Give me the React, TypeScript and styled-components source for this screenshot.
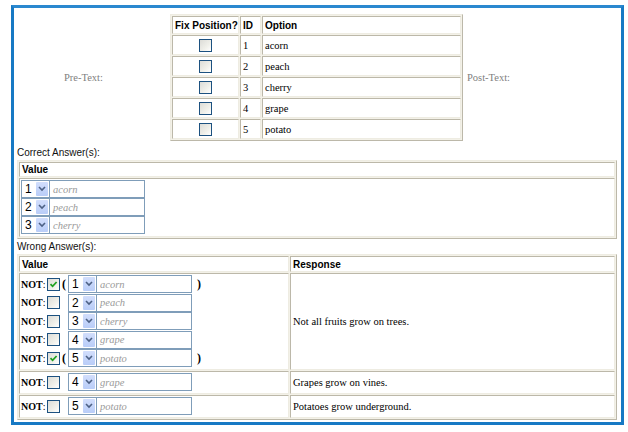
import React from 'react'
import styled, { createGlobalStyle } from 'styled-components'

const GlobalStyles = createGlobalStyle`
  html, body {
    margin: 0;
    padding: 0;
    background: #ffffff;
  }
  body {
    font-family: "Liberation Serif", "Times New Roman", serif;
    font-size: 10.5px;
    color: #000;
  }
`

const Frame = styled.div`
  box-sizing: border-box;
  margin: 5px 0 0 11px;
  width: 613px;
  height: 420px;
  overflow: hidden;
  border: 3px solid #1779c4;
  border-top-color: #2a88cf;
  padding: 6px 5px 0 3px;
  background: #fff;
`

const TopSection = styled.div`
  display: grid;
  grid-template-columns: 153px 293px 1fr;
  align-items: center;
`

const SideText = styled.div<{ $side: 'pre' | 'post' }>`
  color: #808080;
  font-family: "Liberation Serif", serif;
  font-size: 10.5px;
  text-align: ${(p) => (p.$side === 'pre' ? 'center' : 'left')};
  padding: ${(p) => (p.$side === 'pre' ? '0 20px 0 0' : '0 0 0 4px')};
`

const Grid = styled.table<{ $width: number }>`
  width: ${(p) => p.$width}px;
  border-collapse: separate;
  border-spacing: 1px;
  border: 1px solid;
  border-color: #eeece2 #bcb8a9 #bcb8a9 #eeece2;
  background: #f3f1e8;
  table-layout: fixed;
`

const HeadCell = styled.th<{ $w?: number; $h?: number }>`
  ${(p) => (p.$w ? `width: ${p.$w}px;` : '')}
  height: ${(p) => p.$h ?? 15}px;
  box-sizing: border-box;
  border: 1px solid;
  border-color: #bcb8a9 #eeece2 #eeece2 #bcb8a9;
  background: #fff;
  padding: 0 2px;
  text-align: left;
  vertical-align: middle;
  font-family: "Liberation Sans", Arial, sans-serif;
  font-weight: bold;
  font-size: 10px;
  white-space: nowrap;
`

const Cell = styled.td<{ $h?: number; $center?: boolean; $pad?: string }>`
  ${(p) => (p.$h ? `height: ${p.$h}px;` : '')}
  box-sizing: border-box;
  border: 1px solid;
  border-color: #bcb8a9 #eeece2 #eeece2 #bcb8a9;
  background: #fff;
  padding: ${(p) => p.$pad ?? '0 2px'};
  text-align: ${(p) => (p.$center ? 'center' : 'left')};
  vertical-align: middle;
  font-family: "Liberation Serif", serif;
  font-size: 10.5px;
`

const SectionLabel = styled.div<{ $top: number }>`
  font-family: "Liberation Sans", Arial, sans-serif;
  font-size: 10px;
  line-height: 13px;
  padding-top: ${(p) => p.$top}px;
  padding-bottom: 1px;
  color: #111;
`

const Box = styled.span`
  display: inline-flex;
  align-items: center;
  justify-content: center;
  box-sizing: border-box;
  width: 13px;
  height: 13px;
  border: 1px solid #1c5180;
  background: linear-gradient(135deg, #dcdcd7 0%, #f0f0ea 60%, #ffffff 100%);
  vertical-align: middle;
`

const CheckBox = ({ checked }: { checked?: boolean }) => (
  <Box>
    {checked && (
      <svg width="9" height="9" viewBox="0 0 9 9">
        <path d="M1.5 4.2 L3.6 6.3 L7.6 2" fill="none" stroke="#21a121" strokeWidth="1.8" />
      </svg>
    )}
  </Box>
)

const Picker = styled.span`
  display: inline-flex;
  height: 18px;
  vertical-align: middle;
`

const NumSelect = styled.span`
  box-sizing: border-box;
  display: inline-flex;
  align-items: center;
  justify-content: space-between;
  width: 29px;
  height: 18px;
  border: 1px solid #7f9db9;
  padding: 1px 1px 1px 3px;
  background: #fff;
  font-family: "Liberation Sans", Arial, sans-serif;
  font-size: 12px;
  color: #000;
`

const Arrow = styled.span`
  display: inline-flex;
  align-items: center;
  justify-content: center;
  width: 12px;
  height: 14px;
  background: linear-gradient(180deg, #d2defc 0%, #b9cdf8 100%);
  border-radius: 1px;
`

const TextBox = styled.span`
  box-sizing: border-box;
  display: inline-flex;
  align-items: center;
  width: 95px;
  height: 18px;
  border: 1px solid #7f9db9;
  border-left: none;
  padding-left: 3px;
  background: #fff;
  font-family: "Liberation Serif", serif;
  font-style: italic;
  font-size: 10.5px;
  color: #9a9a9a;
`

const ValuePicker = ({ n, text }: { n: number; text: string }) => (
  <Picker>
    <NumSelect>
      {n}
      <Arrow>
        <svg width="8" height="6" viewBox="0 0 8 6">
          <polyline points="1,1 4,4 7,1" fill="none" stroke="#4d6185" strokeWidth="1.6" />
        </svg>
      </Arrow>
    </NumSelect>
    <TextBox>{text}</TextBox>
  </Picker>
)

const PickerStack = styled.div`
  display: flex;
  flex-direction: column;
  align-items: flex-start;
`

const NotLine = styled.div`
  display: flex;
  align-items: center;
  height: 18.5px;
  font-family: "Liberation Serif", serif;
  font-size: 10px;
`

const NotLabel = styled.span`
  width: 26px;
  b {
    font-weight: bold;
  }
`

const Paren = styled.span<{ $show: boolean; $side: 'l' | 'r' }>`
  visibility: ${(p) => (p.$show ? 'visible' : 'hidden')};
  font-weight: bold;
  font-size: 12px;
  margin: ${(p) => (p.$side === 'l' ? '0 2px 0 2px' : '0 0 0 5px')};
`

const fruits = ['acorn', 'peach', 'cherry', 'grape', 'potato']

const NotRow = ({ n, text, checked }: { n: number; text: string; checked?: boolean }) => (
  <NotLine>
    <NotLabel>
      <b>NOT</b>:
    </NotLabel>
    <CheckBox checked={checked} />
    <Paren $show={!!checked} $side="l">(</Paren>
    <ValuePicker n={n} text={text} />
    <Paren $show={!!checked} $side="r">)</Paren>
  </NotLine>
)

export default function App() {
  return (
    <>
      <GlobalStyles />
      <Frame>
        <TopSection>
          <SideText $side="pre">Pre-Text:</SideText>
          <Grid $width={293}>
            <tbody>
              <tr>
                <HeadCell $w={67} $h={18}>Fix Position?</HeadCell>
                <HeadCell $w={21} $h={18}>ID</HeadCell>
                <HeadCell $h={18}>Option</HeadCell>
              </tr>
              {fruits.map((f, i) => (
                <tr key={f}>
                  <Cell $h={20} $center>
                    <CheckBox />
                  </Cell>
                  <Cell $h={20}>{i + 1}</Cell>
                  <Cell $h={20}>{f}</Cell>
                </tr>
              ))}
            </tbody>
          </Grid>
          <SideText $side="post">Post-Text:</SideText>
        </TopSection>

        <SectionLabel $top={5}>Correct Answer(s):</SectionLabel>
        <Grid $width={600}>
          <tbody>
            <tr>
              <HeadCell $h={15}>Value</HeadCell>
            </tr>
            <tr>
              <Cell $pad="1px 1px 2px 1px">
                <PickerStack>
                  <ValuePicker n={1} text="acorn" />
                  <ValuePicker n={2} text="peach" />
                  <ValuePicker n={3} text="cherry" />
                </PickerStack>
              </Cell>
            </tr>
          </tbody>
        </Grid>

        <SectionLabel $top={1}>Wrong Answer(s):</SectionLabel>
        <Grid $width={600}>
          <tbody>
            <tr>
              <HeadCell $w={270} $h={16}>Value</HeadCell>
              <HeadCell $h={16}>Response</HeadCell>
            </tr>
            <tr>
              <Cell $h={95} $pad="1px 1px">
                <NotRow n={1} text="acorn" checked />
                <NotRow n={2} text="peach" />
                <NotRow n={3} text="cherry" />
                <NotRow n={4} text="grape" />
                <NotRow n={5} text="potato" checked />
              </Cell>
              <Cell>Not all fruits grow on trees.</Cell>
            </tr>
            <tr>
              <Cell $h={23} $pad="1px 1px">
                <NotRow n={4} text="grape" />
              </Cell>
              <Cell>Grapes grow on vines.</Cell>
            </tr>
            <tr>
              <Cell $h={23} $pad="1px 1px">
                <NotRow n={5} text="potato" />
              </Cell>
              <Cell>Potatoes grow underground.</Cell>
            </tr>
          </tbody>
        </Grid>
      </Frame>
    </>
  )
}
